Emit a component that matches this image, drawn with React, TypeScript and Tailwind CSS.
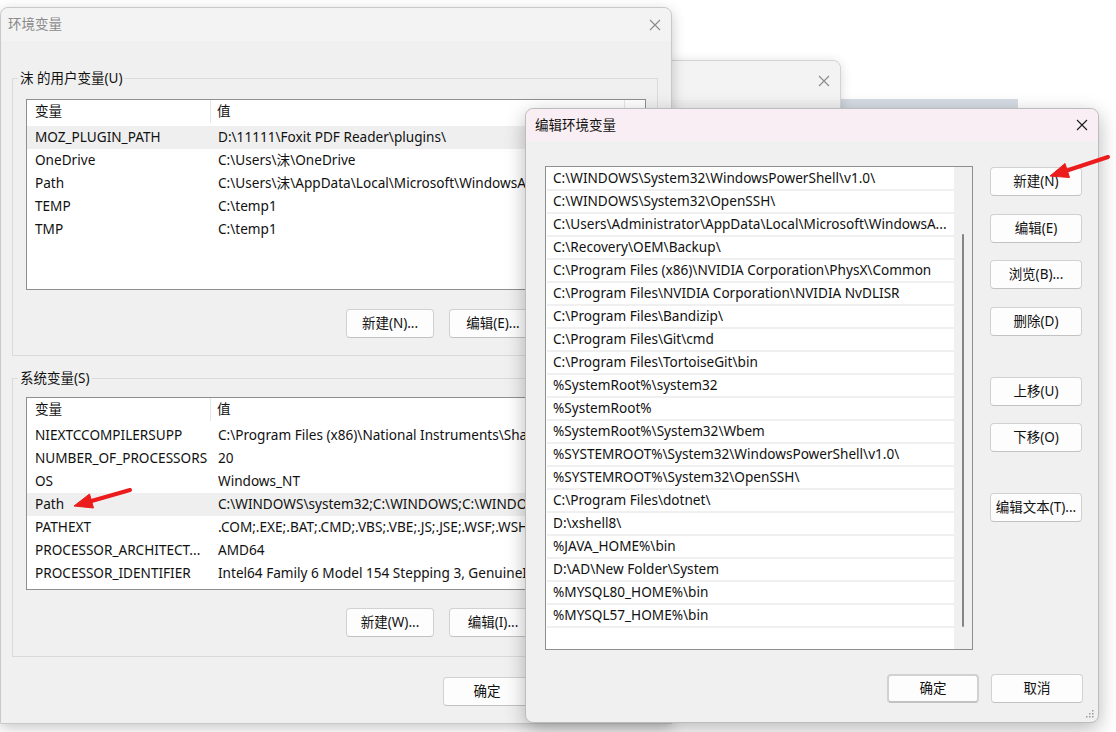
import React from 'react';

const userVars = [
  ['MOZ_PLUGIN_PATH', 'D:\\11111\\Foxit PDF Reader\\plugins\\'],
  ['OneDrive', 'C:\\Users\\沫\\OneDrive'],
  ['Path', 'C:\\Users\\沫\\AppData\\Local\\Microsoft\\WindowsApps;C:\\Users\\沫\\bin'],
  ['TEMP', 'C:\\temp1'],
  ['TMP', 'C:\\temp1']
];

const sysVars = [
  ['NIEXTCCOMPILERSUPP', 'C:\\Program Files (x86)\\National Instruments\\Shared\\ExternalCompilerSupport\\C\\'],
  ['NUMBER_OF_PROCESSORS', '20'],
  ['OS', 'Windows_NT'],
  ['Path', 'C:\\WINDOWS\\system32;C:\\WINDOWS;C:\\WINDOWS\\System32\\Wbem;C:\\WINDOWS'],
  ['PATHEXT', '.COM;.EXE;.BAT;.CMD;.VBS;.VBE;.JS;.JSE;.WSF;.WSH;.MSC'],
  ['PROCESSOR_ARCHITECT...', 'AMD64'],
  ['PROCESSOR_IDENTIFIER', 'Intel64 Family 6 Model 154 Stepping 3, GenuineIntel']
];

const paths = [
  'C:\\WINDOWS\\System32\\WindowsPowerShell\\v1.0\\',
  'C:\\WINDOWS\\System32\\OpenSSH\\',
  'C:\\Users\\Administrator\\AppData\\Local\\Microsoft\\WindowsA...',
  'C:\\Recovery\\OEM\\Backup\\',
  'C:\\Program Files (x86)\\NVIDIA Corporation\\PhysX\\Common',
  'C:\\Program Files\\NVIDIA Corporation\\NVIDIA NvDLISR',
  'C:\\Program Files\\Bandizip\\',
  'C:\\Program Files\\Git\\cmd',
  'C:\\Program Files\\TortoiseGit\\bin',
  '%SystemRoot%\\system32',
  '%SystemRoot%',
  '%SystemRoot%\\System32\\Wbem',
  '%SYSTEMROOT%\\System32\\WindowsPowerShell\\v1.0\\',
  '%SYSTEMROOT%\\System32\\OpenSSH\\',
  'C:\\Program Files\\dotnet\\',
  'D:\\xshell8\\',
  '%JAVA_HOME%\\bin',
  'D:\\AD\\New Folder\\System',
  '%MYSQL80_HOME%\\bin',
  '%MYSQL57_HOME%\\bin'
];

function CloseIcon({ color = '#5a5a5a' }: { color?: string }) {
  return (
    <svg width="12" height="12" viewBox="0 0 12 12">
      <path d="M1 1L11 11M11 1L1 11" stroke={color} strokeWidth="1.1" />
    </svg>
  );
}

function Btn({ children, className = '' }: { children: React.ReactNode; className?: string }) {
  return (
    <div
      className={`h-[29px] flex items-center justify-center rounded-[4px] border border-[#d1d1d1] border-b-[#c2c2c2] bg-[#fdfdfd] text-[13.5px] text-[#111] ${className}`}
    >
      {children}
    </div>
  );
}

function VarList({ rows, selected, height }: { rows: string[][]; selected: number; height: string }) {
  return (
    <div className={`w-[620px] ${height} border border-[#8e8f8f] bg-white overflow-hidden`}>
      <div className="flex h-[23px] text-[13.6px] text-[#111]">
        <div className="w-[184px] pl-[8px] flex items-center border-r border-[#e5e5e5]">变量</div>
        <div className="w-[414px] pl-[6px] flex items-center border-r border-[#e5e5e5]">值</div>
        <div className="flex-1" />
      </div>
      <div className="pt-[3px]">
        {rows.map(([k, v], i) => (
          <div
            key={k + i}
            className={`flex h-[23px] items-center text-[13.6px] text-[#111] whitespace-nowrap ${i === selected ? 'bg-[#efefef]' : ''}`}
          >
            <div className="w-[184px] pl-[8px] overflow-hidden">{k}</div>
            <div className="w-[414px] pl-[7px] overflow-hidden">{v}</div>
          </div>
        ))}
      </div>
    </div>
  );
}

export default function App() {
  return (
    <div className="relative w-[1116px] h-[732px] overflow-hidden bg-white font-['Noto_Sans','Noto_Sans_CJK_SC',sans-serif]">
      {/* window far behind */}
      <div className="absolute left-[700px] top-[99px] w-[318px] h-[40px] bg-[#d5dce3]" />

      {/* second window behind */}
      <div className="absolute left-[560px] top-[60px] w-[281px] h-[600px] rounded-t-lg border border-[#d3d3d3] bg-[#f0f0f0] shadow-[0_2px_12px_rgba(0,0,0,0.15)]">
        <div className="h-[39px] rounded-t-lg bg-[#f3f3f3] flex items-center justify-end pr-[10px]">
          <CloseIcon color="#8a8a8a" />
        </div>
      </div>

      {/* 环境变量 window */}
      <div className="absolute left-0 top-[7px] w-[672px] h-[717px] flex flex-col rounded-t-lg border border-[#c9c9c9] bg-[#f0f0f0] shadow-[0_4px_14px_rgba(0,0,0,0.22)]">
        <div className="h-[33px] flex items-center justify-between pl-[7px] pr-[10px] rounded-t-lg bg-[#f3f3f3] text-[13.5px] text-[#8a8a8a]">
          <span>环境变量</span>
          <CloseIcon color="#8a8a8a" />
        </div>
        <div className="pl-[11px] pt-[28px]">
          <fieldset className="w-[646px] border border-[#dadada] p-0">
            <legend className="ml-[5px] px-[2px] text-[13.5px] leading-[18px] text-[#111]">沫 的用户变量(U)</legend>
            <div className="pl-[13px] pt-[12px] pb-[17px]">
              <VarList rows={userVars} selected={0} height="h-[191px]" />
              <div className="mt-[19px] flex justify-end gap-[15px] pr-[17px]">
                <Btn className="w-[88px]">新建(N)...</Btn>
                <Btn className="w-[88px]">编辑(E)...</Btn>
                <Btn className="w-[88px]">删除(D)</Btn>
              </div>
            </div>
          </fieldset>
          <fieldset className="mt-[13px] w-[646px] border border-[#dadada] p-0">
            <legend className="ml-[5px] px-[2px] text-[13.5px] leading-[18px] text-[#111]">系统变量(S)</legend>
            <div className="pl-[13px] pt-[10px] pb-[19px]">
              <VarList rows={sysVars} selected={3} height="h-[193px]" />
              <div className="mt-[18px] flex justify-end gap-[15px] pr-[17px]">
                <Btn className="w-[88px]">新建(W)...</Btn>
                <Btn className="w-[88px]">编辑(I)...</Btn>
                <Btn className="w-[88px]">删除(L)</Btn>
              </div>
            </div>
          </fieldset>
          <div className="mt-[20px] flex justify-end gap-[15px] pr-[37px]">
            <Btn className="w-[88px]">确定</Btn>
            <Btn className="w-[88px]">取消</Btn>
          </div>
        </div>
      </div>

      {/* 编辑环境变量 dialog */}
      <div className="absolute left-[525px] top-[108px] w-[574px] h-[615px] flex flex-col rounded-lg border border-[#bcbcbc] bg-[#f0f0f0] shadow-[0_6px_20px_rgba(0,0,0,0.28)]">
        <div className="h-[32px] flex items-center justify-between pl-[9px] pr-[10px] rounded-t-lg bg-[#f9eef3] text-[13.5px] text-[#111]">
          <span>编辑环境变量</span>
          <CloseIcon color="#1b1b1b" />
        </div>
        <div className="pl-[19px] pt-[25px] flex">
          <div className="w-[428px] h-[484px] border border-[#8e8f8f] bg-white flex">
            <div className="flex-1 pt-[1px] pl-[1px] overflow-hidden">
              {paths.map((p, i) => (
                <div
                  key={i}
                  className="h-[23px] border-b-2 border-[#f0f0f0] pl-[6px] flex items-center text-[13.6px] text-[#111] whitespace-nowrap overflow-hidden"
                >
                  {p}
                </div>
              ))}
            </div>
            <div className="w-[18px] bg-[#f0f0f0] flex justify-center pt-[67px]">
              <div className="w-[2px] h-[393px] rounded-full bg-[#858585]" />
            </div>
          </div>
          <div className="ml-[17px] w-[92px] flex flex-col pt-[1px]">
            <Btn>新建(N)</Btn>
            <Btn className="mt-[18px]">编辑(E)</Btn>
            <Btn className="mt-[17px]">浏览(B)...</Btn>
            <Btn className="mt-[18px]">删除(D)</Btn>
            <Btn className="mt-[41px]">上移(U)</Btn>
            <Btn className="mt-[17px]">下移(O)</Btn>
            <Btn className="mt-[41px]">编辑文本(T)...</Btn>
          </div>
        </div>
        <div className="mt-[24px] flex justify-end gap-[12px] pr-[15px]">
          <Btn className="w-[92px] border-2 border-[#3e86d6] border-b-[#3e86d6]">确定</Btn>
          <Btn className="w-[92px]">取消</Btn>
        </div>
        <svg className="absolute right-[3px] bottom-[3px]" width="10" height="10" viewBox="0 0 10 10">
          <g fill="#9a9a9a">
            <rect x="7" y="1" width="1.5" height="1.5" />
            <rect x="4" y="4" width="1.5" height="1.5" />
            <rect x="7" y="4" width="1.5" height="1.5" />
            <rect x="1" y="7" width="1.5" height="1.5" />
            <rect x="4" y="7" width="1.5" height="1.5" />
            <rect x="7" y="7" width="1.5" height="1.5" />
          </g>
        </svg>
      </div>

      {/* red annotation arrows */}
      <svg className="absolute inset-0 pointer-events-none" width="1116" height="732">
        <g fill="#ec1c1c" stroke="#ec1c1c">
          <line x1="1108" y1="157" x2="1064" y2="171.5" strokeWidth="4" strokeLinecap="round" />
          <polygon points="1050,176 1069.5,177.5 1065,163.5" strokeWidth="1" strokeLinejoin="round" />
          <line x1="130" y1="490" x2="88" y2="502" strokeWidth="4" strokeLinecap="round" />
          <polygon points="74,506 93.5,508 89.5,494" strokeWidth="1" strokeLinejoin="round" />
        </g>
      </svg>
    </div>
  );
}
